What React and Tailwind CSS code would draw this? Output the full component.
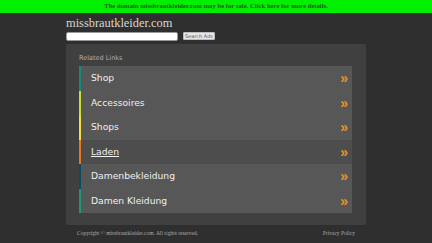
import React from 'react';

const links = [
  { label: 'Shop', bar: 'border-[#1a8a78]' },
  { label: 'Accessoires', bar: 'border-[#c8e02c]' },
  { label: 'Shops', bar: 'border-[#f0e040]' },
  { label: 'Laden', bar: 'border-[#e9761c]', active: true },
  { label: 'Damenbekleidung', bar: 'border-[#0e4a5e]' },
  { label: 'Damen Kleidung', bar: 'border-[#23957a]' },
];

const App = () => {
  return (
    <div className="w-[432px] h-[243px] bg-[#2f2f2f] overflow-hidden">
      {/* sale banner */}
      <div className="h-[13px] bg-[#00f000] flex items-center justify-center">
        <span className="text-[6.7px] font-bold text-[#1c5a1c] font-['Liberation_Serif',serif] leading-none">
          The domain missbrautkleider.com may be for sale. Click here for more details.
        </span>
      </div>

      <div className="w-[300px] ml-[66px]">
        <div className="text-[12.4px] leading-none text-[#d8d8d8] font-['Liberation_Serif',serif] mt-[4px] h-[14px]">
          missbrautkleider.com
        </div>
        <div className="flex items-center h-[10px]">
          <div className="w-[112px] h-[9px] bg-white rounded-[2px] border border-[#999]" />
          <div className="ml-[5px] w-[32px] h-[8px] bg-[#e8e8e8] rounded-[1px] border border-[#bbb] text-[5px] leading-none text-[#555] font-['DejaVu_Sans',sans-serif] flex items-center justify-center">
            Search Ads
          </div>
        </div>

        {/* related links panel */}
        <div className="mt-[3px] h-[181px] bg-[#404040] rounded-[2px] pl-[13px] pr-[14px] pt-[11px]">
          <div className="text-[6.5px] leading-none text-[#b0b0b0] font-['DejaVu_Sans',sans-serif] h-[11px]">
            Related Links
          </div>
          <div className="flex flex-col">
            {links.map((l) => (
              <div
                key={l.label}
                className={`h-[24.5px] border-l-[2.5px] ${l.bar} ${l.active ? 'bg-[#4d4d4d]' : 'bg-[#575757]'} flex items-center justify-between pl-[10px] pr-[4px]`}
              >
                <span className={`text-[9.2px] text-[#f0f0f0] font-['DejaVu_Sans',sans-serif] ${l.active ? 'underline' : ''}`}>
                  {l.label}
                </span>
                <span className="text-[14px] font-bold text-[#e0952c] font-['Liberation_Sans',sans-serif] leading-none">»</span>
              </div>
            ))}
          </div>
        </div>

        <div className="flex justify-between mt-[4px] pl-[11px] pr-[11px] text-[5.5px] text-[#aaa] font-['Liberation_Serif',serif]">
          <span>Copyright © missbrautkleider.com. All rights reserved.</span>
          <span>Privacy Policy</span>
        </div>
      </div>
    </div>
  );
};

export default App;
